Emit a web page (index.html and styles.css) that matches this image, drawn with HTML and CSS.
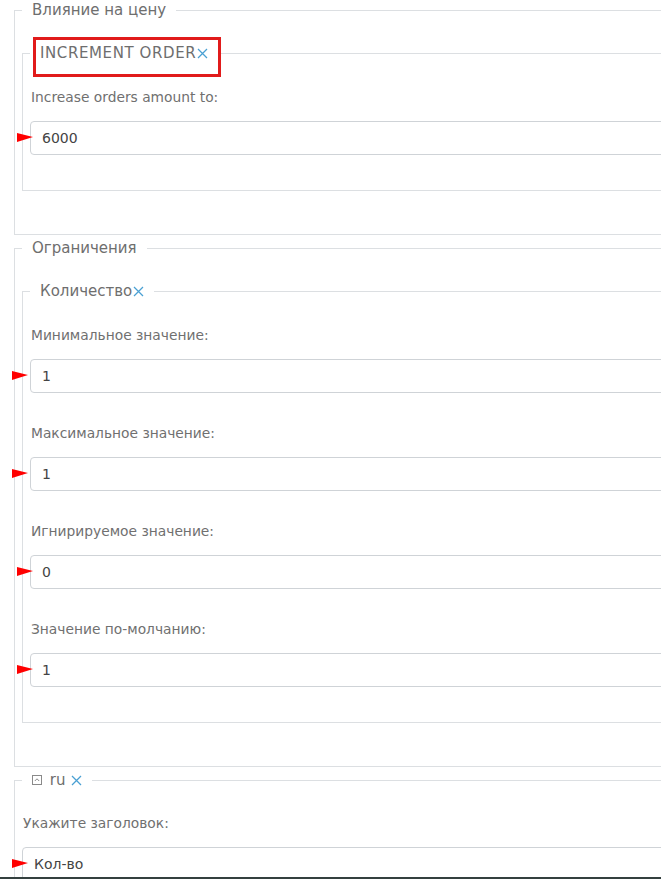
FILE: index.html
```html
<!DOCTYPE html>
<html lang="ru">
<head>
    <meta charset="UTF-8">
    <meta name="viewport" content="width=device-width, initial-scale=1.0">
    <title>Product options</title>
    <link rel="stylesheet" href="styles.css">
</head>
<body>
    <div class="page">
        <form class="options" action="#" method="post">

            <fieldset class="box">
                <legend>Влияние на цену</legend>
                <fieldset class="box inner">
                    <legend class="marked"><span class="caps">INCREMENT ORDER</span><svg class="remove" width="11" height="11" viewBox="0 0 11 11"><path d="M1 1 L10 10 M10 1 L1 10"/></svg></legend>
                    <div class="fields">
                        <div class="field">
                            <label for="amount">Increase orders amount to:</label>
                            <div class="control"><span class="arrow arrow_near"></span><input type="text" id="amount" value="6000"></div>
                        </div>
                    </div>
                </fieldset>
            </fieldset>

            <fieldset class="box">
                <legend>Ограничения</legend>
                <fieldset class="box inner">
                    <legend>Количество<svg class="remove" width="11" height="11" viewBox="0 0 11 11"><path d="M1 1 L10 10 M10 1 L1 10"/></svg></legend>
                    <div class="fields">
                        <div class="field">
                            <label for="min">Минимальное значение:</label>
                            <div class="control"><span class="arrow arrow_far"></span><input type="text" id="min" value="1"></div>
                        </div>
                        <div class="field">
                            <label for="max">Максимальное значение:</label>
                            <div class="control"><span class="arrow arrow_far"></span><input type="text" id="max" value="1"></div>
                        </div>
                        <div class="field">
                            <label for="ignore">Игнирируемое значение:</label>
                            <div class="control"><span class="arrow arrow_near"></span><input type="text" id="ignore" value="0"></div>
                        </div>
                        <div class="field">
                            <label for="def">Значение по-молчанию:</label>
                            <div class="control"><span class="arrow arrow_near"></span><input type="text" id="def" value="1"></div>
                        </div>
                    </div>
                </fieldset>
            </fieldset>

            <fieldset class="box">
                <legend>
                    <svg class="collapse" width="10" height="10" viewBox="0 0 10 10">
                        <rect x="0.5" y="0.5" width="9" height="9" fill="none" stroke="#8a8a8a"/>
                        <path d="M2.8 6 L5 3.8 L7.2 6" fill="none" stroke="#8a8a8a"/>
                    </svg>
                    ru <svg class="remove" width="11" height="11" viewBox="0 0 11 11"><path d="M1 1 L10 10 M10 1 L1 10"/></svg>
                </legend>
                <div class="fields">
                    <div class="field">
                        <label for="title">Укажите заголовок:</label>
                        <div class="control"><span class="arrow arrow_last"></span><input type="text" id="title" value="Кол-во"></div>
                    </div>
                </div>
            </fieldset>

        </form>
    </div>
    <div class="taskbar"></div>
</body>
</html>
```

FILE: styles.css
```css
body {
    margin: 0;
    background: #fff;
    font-family: "DejaVu Sans", sans-serif;
    color: #6f6f6f;
}

.page {
    width: 661px;
    overflow: hidden;
}

.options {
    width: 740px;
    padding-left: 14px;
}

.box {
    margin: 0 0 3px 0;
    padding: 23px 0 43px 7px;
    border: 1px solid #dcdfe2;
}

.box legend {
    padding: 0 10px;
    font-size: 15px;
    line-height: 20px;
    color: #6e6e6e;
}

.box.inner {
    margin: 0;
    padding: 24px 0 35px 7px;
}

.caps {
    letter-spacing: 0.6px;
}

.marked {
    position: relative;
}

/* red annotation frame */
.marked::after {
    content: "";
    position: absolute;
    top: -6px;
    bottom: -14px;
    left: 3px;
    right: -3px;
    border: 3px solid #e11b1b;
}

.remove {
    margin-left: 1px;
    vertical-align: -1px;
    fill: none;
    stroke: #4aa0d3;
    stroke-width: 1.25;
}

.collapse {
    vertical-align: 0;
    margin-right: 3px;
}

.fields {
    display: flex;
    flex-direction: column;
    gap: 30px;
}

.field {
    display: flex;
    flex-direction: column;
    gap: 14px;
}

.field label {
    font-size: 13.8px;
    line-height: 20px;
    padding-left: 1px;
    color: #707070;
}

.control {
    position: relative;
}

.control input {
    box-sizing: border-box;
    width: 100%;
    height: 34px;
    padding: 0 11px;
    border: 1px solid #cfd3d7;
    border-radius: 4px;
    font-family: inherit;
    font-size: 14px;
    color: #444;
}

/* red annotation pointers */
.arrow {
    position: absolute;
    top: 12px;
    width: 0;
    height: 0;
    border-top: 4px solid transparent;
    border-bottom: 5px solid transparent;
    border-left: 16px solid #f00;
}

.arrow_near {
    left: -13px;
}

.arrow_far {
    left: -18px;
}

.arrow_last {
    left: -10px;
}

.taskbar {
    position: fixed;
    left: 0;
    right: 0;
    bottom: 0;
    height: 2px;
    background: #34403f;
}
```
